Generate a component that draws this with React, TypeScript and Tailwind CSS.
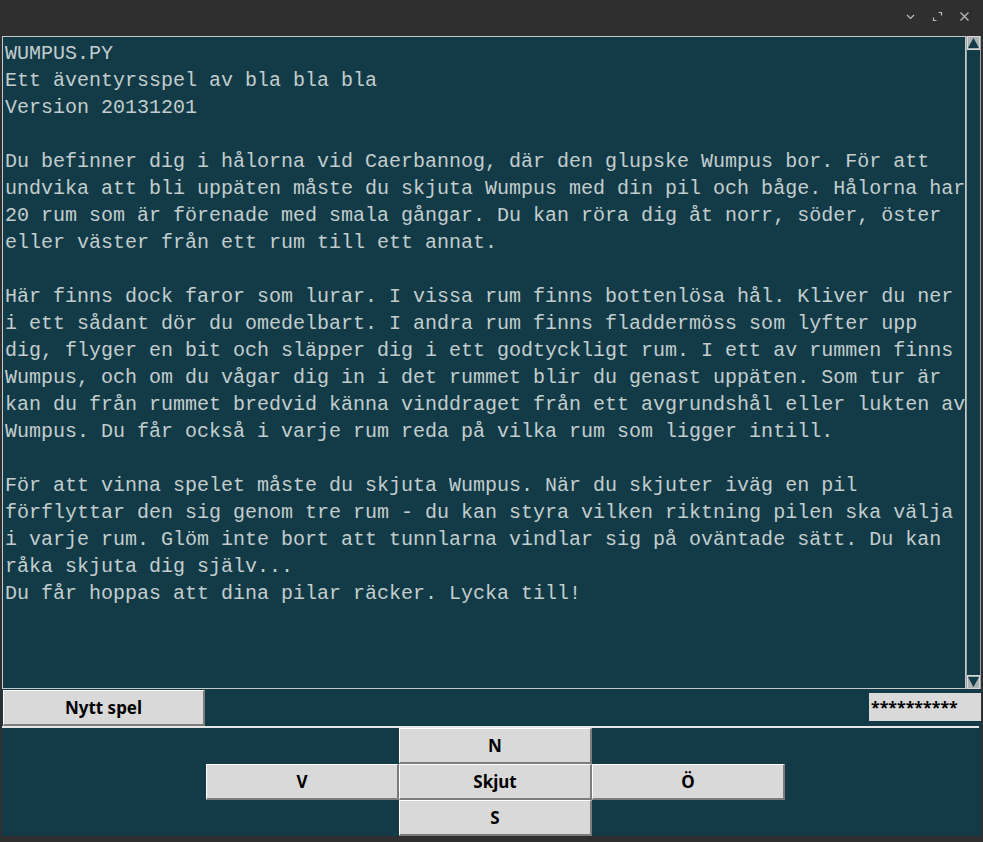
import React from 'react'

const lines = [
  'WUMPUS.PY',
  'Ett äventyrsspel av bla bla bla',
  'Version 20131201',
  '',
  'Du befinner dig i hålorna vid Caerbannog, där den glupske Wumpus bor. För att',
  'undvika att bli uppäten måste du skjuta Wumpus med din pil och båge. Hålorna har',
  '20 rum som är förenade med smala gångar. Du kan röra dig åt norr, söder, öster',
  'eller väster från ett rum till ett annat.',
  '',
  'Här finns dock faror som lurar. I vissa rum finns bottenlösa hål. Kliver du ner',
  'i ett sådant dör du omedelbart. I andra rum finns fladdermöss som lyfter upp',
  'dig, flyger en bit och släpper dig i ett godtyckligt rum. I ett av rummen finns',
  'Wumpus, och om du vågar dig in i det rummet blir du genast uppäten. Som tur är',
  'kan du från rummet bredvid känna vinddraget från ett avgrundshål eller lukten av',
  'Wumpus. Du får också i varje rum reda på vilka rum som ligger intill.',
  '',
  'För att vinna spelet måste du skjuta Wumpus. När du skjuter iväg en pil',
  'förflyttar den sig genom tre rum - du kan styra vilken riktning pilen ska välja',
  'i varje rum. Glöm inte bort att tunnlarna vindlar sig på oväntade sätt. Du kan',
  'råka skjuta dig själv...',
  'Du får hoppas att dina pilar räcker. Lycka till!',
]

function TkButton({ label, className = '' }: { label: string; className?: string }) {
  return (
    <button
      type="button"
      className={`flex items-center justify-center border-t border-l border-t-white border-l-white border-b-2 border-r-2 border-b-[#7c7c7c] border-r-[#7c7c7c] bg-[#d9d9d9] text-[17px] font-bold text-black ${className}`}
      style={{ fontFamily: '"Noto Sans", "Open Sans", sans-serif' }}
    >
      {label}
    </button>
  )
}

function Arrow({ up }: { up?: boolean }) {
  return (
    <div className="flex h-[14px] items-center justify-center border border-[#d8d8d8] bg-[#a9b1b3]">
      <svg width="11" height="10" viewBox="0 0 11 10">
        {up ? (
          <polygon points="5.5,0 11,10 0,10" fill="#123b47" />
        ) : (
          <polygon points="0,0 11,0 5.5,10" fill="#123b47" />
        )}
      </svg>
    </div>
  )
}

export default function App() {
  return (
    <div className="flex h-[842px] w-[983px] flex-col overflow-hidden bg-[#2f2f2f]">
      {/* title bar */}
      <div className="flex h-[36px] shrink-0 items-center justify-end gap-[12px] pr-[11px] pb-[4px] text-[#bdbdbd]">
        <svg width="15" height="15" viewBox="0 0 15 15" fill="none" stroke="currentColor" strokeWidth="1.2">
          <path d="M4 6l3.5 3.5L11 6" />
        </svg>
        <svg width="15" height="15" viewBox="0 0 15 15" fill="none" stroke="currentColor" strokeWidth="1.2">
          <path d="M8.5 3.5H11.5V6.5M6.5 11.5H3.5V8.5" />
        </svg>
        <svg width="15" height="15" viewBox="0 0 15 15" fill="none" stroke="currentColor" strokeWidth="1.2">
          <path d="M3.5 3.5l8 8M11.5 3.5l-8 8" />
        </svg>
      </div>

      <div className="ml-[2px] mr-[2px] flex h-[800px] shrink-0 flex-col bg-[#123b47]">
        {/* text + scrollbar */}
        <div className="flex h-[653px] shrink-0">
          <div className="flex-1 overflow-hidden border border-[#c4cacb] px-[2px] pt-[3px]">
            <pre
              className="text-[20px] leading-[27px] text-[#c3cdce]"
              style={{ fontFamily: '"Liberation Mono", "DejaVu Sans Mono", monospace' }}
            >
              {lines.join('\n')}
            </pre>
          </div>
          <div className="flex w-[15px] flex-col border-x border-[#9aa3a5] bg-[#123b47]">
            <Arrow up />
            <div className="flex-1" />
            <Arrow />
          </div>
        </div>

        {/* controls row */}
        <div className="flex h-[37px] shrink-0 items-start justify-between pl-[1px] pt-[1px]">
          <TkButton label="Nytt spel" className="h-[36px] w-[202px]" />
          <div
            className="mt-[3px] flex h-[28px] w-[112px] items-center bg-[#d9d9d9] pl-[2px] text-[16px] font-bold text-black"
            style={{ fontFamily: '"Noto Sans", sans-serif' }}
          >
            **********
          </div>
        </div>

        <div className="mr-[2px] h-[2px] shrink-0 bg-[#e6e6e6]" />

        {/* direction pad */}
        <div className="grid grid-cols-[193px_193px_193px] grid-rows-[36px_36px_36px] pl-[204px]">
          <div />
          <TkButton label="N" />
          <div />
          <TkButton label="V" />
          <TkButton label="Skjut" />
          <TkButton label="Ö" />
          <div />
          <TkButton label="S" />
          <div />
        </div>
      </div>
    </div>
  )
}
